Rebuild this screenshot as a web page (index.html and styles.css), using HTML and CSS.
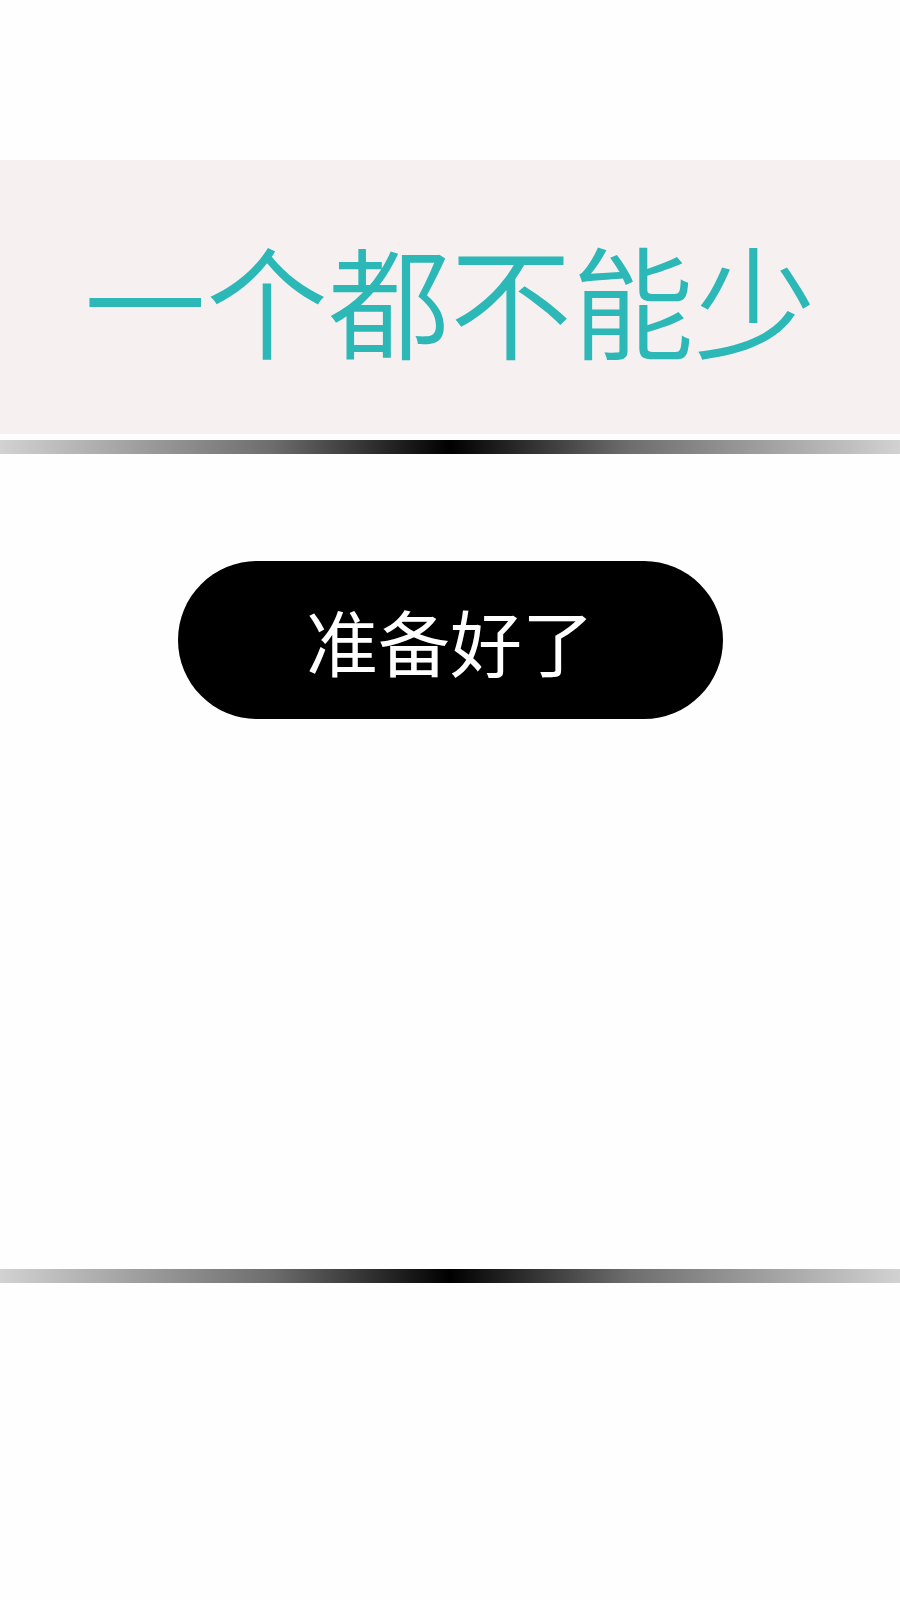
FILE: index.html
```html
<!DOCTYPE html>
<html lang="zh-CN">
<head>
<meta charset="UTF-8" />
<meta name="viewport" content="width=device-width, initial-scale=1" />
<title>一个都不能少</title>
<link rel="stylesheet" href="styles.css">
</head>
<body>
  <div class="page">
    <div class="banner">
      <h1>一个都不能少</h1>
    </div>
    <div class="rule top-rule"></div>
    <div class="content">
      <button type="button" class="ready">准备好了</button>
    </div>
    <div class="rule"></div>
  </div>
</body>
</html>
```

FILE: styles.css
```css
body {
  margin: 0;
  background: #fefefe;
  font-family: "Noto Sans CJK SC", "Noto Sans", sans-serif;
}
.page {
  width: 900px;
  padding-top: 160px;
}
.banner {
  height: 274px;
  background: #f6f0f0;
  display: flex;
  align-items: center;
  justify-content: center;
}
.banner h1 {
  margin: 0;
  font-size: 122px;
  font-weight: 350;
  line-height: 1;
  color: #2cb8b6;
}
.rule {
  height: 14px;
  background: linear-gradient(to right, #d2d2d2, #6e6e6e 30%, #000 50%, #6e6e6e 70%, #d2d2d2);
}
.top-rule {
  margin-top: 6px;
}
.content {
  height: 815px;
  display: flex;
  flex-direction: column;
  align-items: center;
  padding-top: 107px;
  box-sizing: border-box;
}
.ready {
  width: 545px;
  height: 158px;
  border: none;
  border-radius: 79px;
  background: #000;
  color: #fff;
  font-family: "Noto Sans CJK SC", "Noto Sans", sans-serif;
  font-size: 72px;
  line-height: 1;
  cursor: pointer;
}
```
